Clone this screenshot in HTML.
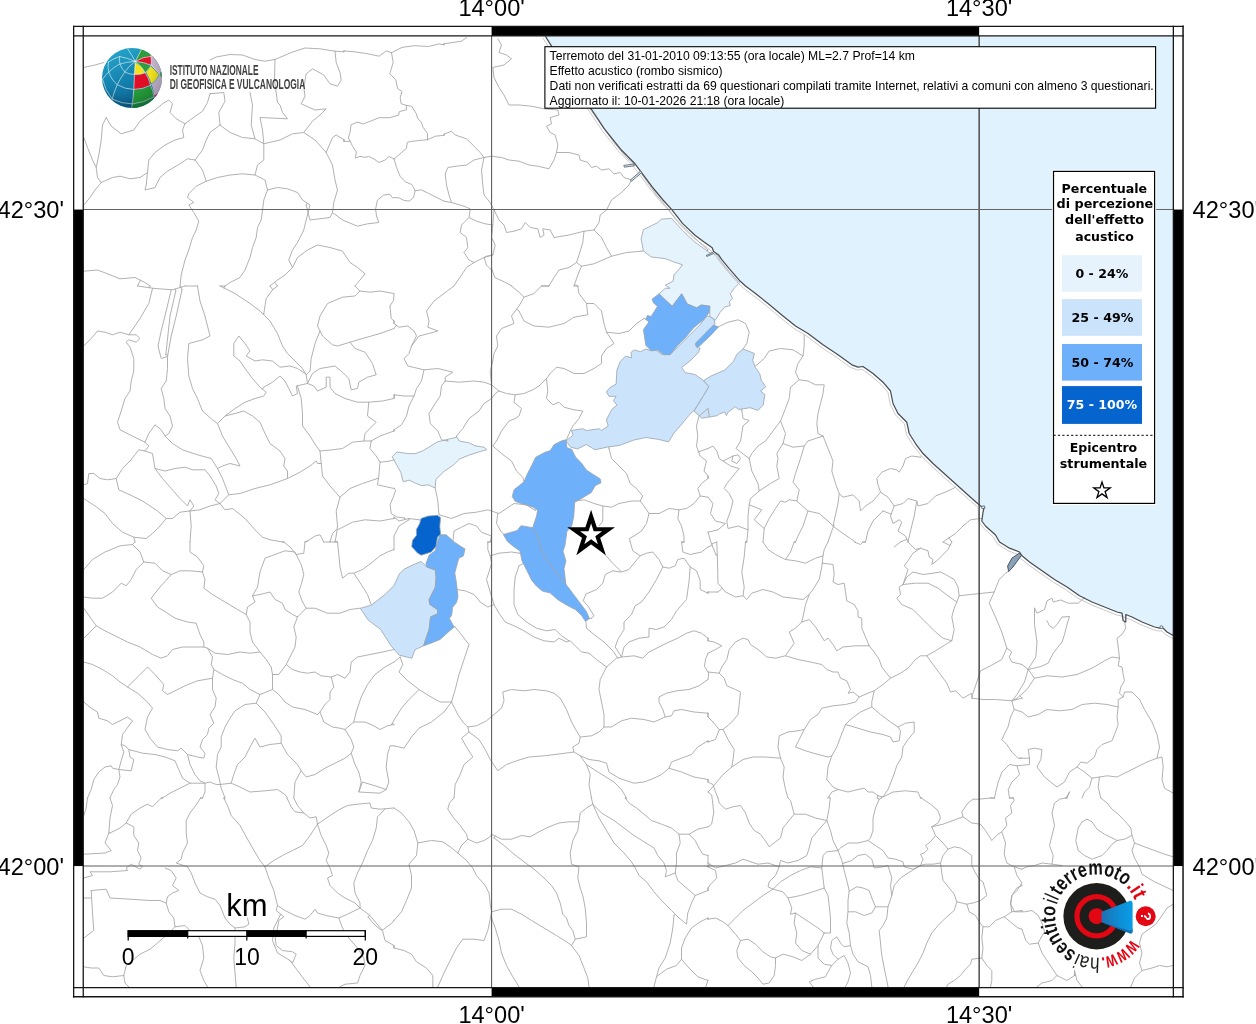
<!DOCTYPE html>
<html lang="it">
<head>
<meta charset="utf-8">
<title>Hai sentito il terremoto - Effetto acustico</title>
<style>
html,body{margin:0;padding:0;background:#fff;}
body{width:1256px;height:1024px;overflow:hidden;position:relative;}
svg{position:absolute;left:0;top:0;display:block;will-change:transform;}
.ax{font-family:"Liberation Sans",Arial,Helvetica,sans-serif;font-size:23.6px;fill:#000;}
.info{font-family:"Liberation Sans",Arial,Helvetica,sans-serif;font-size:12px;fill:#000;}
.lg{font-family:"DejaVu Sans",Verdana,sans-serif;font-weight:bold;font-size:11.45px;fill:#000;text-anchor:middle;}
.bd{fill:none;stroke:#a8a8a8;stroke-width:0.9;stroke-linejoin:round;stroke-linecap:round;}
</style>
</head>
<body>
<svg width="1256" height="1024" viewBox="0 0 1256 1024">
<defs>
<clipPath id="mapclip"><rect x="83.25" y="35.85" width="1090.1" height="951.7"/></clipPath>
</defs>
<rect x="0" y="0" width="1256" height="1024" fill="#fff"/>
<g clip-path="url(#mapclip)">
<!-- sea -->
<path id="sea" fill="#e0f2fe" stroke="none" d="M545.4,36.4 591.6,109.5 604.4,128.8 621.6,150.3 634.5,163.2 641.0,171.8 653.9,189.0 663.0,200.0 671.6,209.4 682.5,223.4 695.0,235.2 704.4,242.2 712.2,247.7 713.6,251.5 718.4,254.7 721.6,259.4 729.4,268.8 740.3,281.3 745.5,286.0 755.5,293.5 768.0,303.5 783.0,316.0 795.5,326.0 808.0,333.5 823.0,344.8 838.0,354.8 851.8,364.8 858.0,367.2 863.0,366.5 873.0,373.5 883.0,382.2 890.5,391.0 893.0,403.5 898.0,413.5 906.8,422.2 909.2,433.5 915.5,443.5 923.0,453.5 933.0,463.5 945.5,474.8 958.0,486.0 970.5,497.2 980.5,506.0 984.2,507.2 983.0,512.2 981.8,521.0 985.5,526.0 995.5,535.0 999.5,542.0 1009.5,548.2 1019.5,552.0 1022.0,555.8 1029.5,562.0 1042.0,570.8 1054.5,579.5 1067.0,587.0 1079.5,595.8 1092.0,602.0 1104.5,607.0 1117.0,612.0 1122.0,613.2 1123.2,620.8 1125.8,622.0 1125.8,614.5 1132.0,617.0 1142.0,622.0 1154.5,627.0 1159.5,628.2 1163.2,628.2 1167.0,632.0 1174.0,636.0 L1174,36 Z"/>
<!-- coloured municipalities -->
<g stroke="#98a2ad" stroke-width="0.8" stroke-linejoin="round">
<path fill="#e5f3fd" d="M661.4,219.1 671.6,218.4 682.5,230.5 695.0,242.2 709.1,252.3 716.9,254.7 720.0,260.2 729.4,271.9 739.5,282.8 734.8,287.5 730.2,293.8 732.5,298.4 729.4,301.6 730.2,305.5 724.7,307.0 720.0,312.5 715.3,320.3 709.8,316.4 709.8,306.2 701.2,305.0 696.6,307.8 687.2,303.9 681.7,293.8 672.3,306.2 665.3,300.0 659.1,293.8 665.3,288.3 670.0,288.3 665.3,285.2 673.1,281.2 673.9,275.0 679.4,268.8 682.5,264.8 673.1,261.7 665.3,258.6 651.2,257.0 643.4,250.8 641.1,239.1 643.4,229.7 651.2,225.8 657.5,222.7Z"/>
<path fill="#cbe4fb" d="M709.8,316.6 714.1,319.3 715.0,323.6 695.8,343.8 696.6,347.3 700.1,348.2 698.4,352.5 689.6,361.3 681.7,367.4 685.2,372.7 694.9,374.4 703.6,380.6 708.9,386.7 703.6,395.5 694.9,409.5 688.7,415.6 680.9,425.2 673.9,433.1 668.6,441.9 658.1,439.3 645.8,437.5 633.6,440.1 619.6,445.4 607.3,447.1 595.0,449.8 586.3,444.5 577.5,448.9 570.5,447.1 566.1,441.0 573.1,434.9 571.4,430.5 582.8,428.7 586.3,430.5 599.4,428.7 601.2,430.5 608.2,426.1 606.4,420.0 611.7,409.5 616.9,405.1 613.4,400.7 616.1,396.3 609.0,396.3 606.4,392.0 609.9,387.6 616.1,384.1 616.9,370.1 620.4,361.3 625.7,356.1 631.8,357.8 630.9,352.5 634.4,349.9 640.6,351.7 645.8,349.0 651.1,350.8 655.5,349.9 661.6,354.3 670.4,354.3 680.9,343.8 691.4,333.3 700.1,324.5 707.1,315.8Z"/>
<path fill="#cbe4fb" d="M743.0,349.0 754.4,353.4 752.7,360.4 755.3,367.4 759.7,373.6 761.4,380.6 765.8,386.7 760.6,391.1 764.9,394.6 763.2,405.1 757.9,410.4 750.1,407.7 738.7,409.5 735.2,406.8 728.2,412.1 726.4,415.6 724.7,412.1 719.4,413.9 717.6,415.6 701.9,418.2 694.0,411.2 703.6,395.5 708.9,386.7 703.6,380.6 710.6,376.2 724.7,370.1 733.4,361.3 736.9,354.3Z"/>
<path fill="#6fb0fa" d="M659.1,293.8 665.3,300.0 672.3,306.2 681.7,293.8 687.2,303.9 696.6,307.8 701.2,305.0 709.8,306.2 709.1,312.5 704.4,318.8 693.4,328.1 685.6,337.5 677.8,345.3 670.0,354.7 663.8,354.7 657.5,350.0 651.2,350.8 645.8,345.3 643.4,329.7 648.9,321.9 645.8,319.5 647.3,315.6 651.2,316.4 657.5,306.2 653.6,303.1 652.0,299.2Z"/>
<path fill="#6fb0fa" d="M713.8,325 718.4,327 711,335 698.5,347 695.8,346 695.8,343 705,333.5Z"/>
<path fill="#e5f3fd" d="M392.2,456.7 396.9,452.0 407.8,453.6 415.6,453.6 423.4,450.5 437.5,441.9 446.9,439.5 457.0,437.2 459.4,441.1 468.8,442.7 475.0,445.8 484.4,447.3 486.7,449.7 481.2,451.2 468.8,455.2 459.4,459.1 453.1,465.3 443.8,471.6 435.9,479.4 435.2,488.0 428.1,484.8 421.9,485.6 415.6,483.3 409.4,480.2 403.1,481.7 400.8,472.3 396.9,465.3Z"/>
<path fill="#cbe4fb" d="M421.2,561.4 426.7,566.9 435.3,570.0 436.1,577.8 435.3,587.2 432.2,593.4 429.1,599.7 429.8,604.4 437.7,609.8 437.7,613.8 430.6,616.9 429.1,629.4 425.9,638.8 423.6,645.8 415.0,649.7 411.9,658.3 399.4,655.2 391.6,646.6 380.6,629.4 368.1,620.0 360.3,608.3 371.2,605.2 385.3,594.2 393.9,585.6 399.4,573.9 404.1,569.2 410.3,566.1Z"/>
<path fill="#6fb0fa" d="M440.0,534.8 446.2,534.8 454.1,541.9 461.1,546.6 465.0,548.9 463.4,555.9 458.8,558.3 456.4,566.9 454.8,573.1 456.4,582.5 458.0,596.6 456.4,602.8 452.5,607.5 451.7,615.3 449.4,618.4 454.1,627.0 447.8,632.5 440.0,639.5 432.2,642.7 423.6,645.8 425.9,638.8 429.1,629.4 430.6,616.9 437.7,613.8 437.7,609.8 429.8,604.4 429.1,599.7 432.2,593.4 435.3,587.2 436.1,577.8 435.3,570.0 426.7,566.9 425.9,563.8 429.1,555.2 435.3,550.5 436.9,543.4Z"/>
<path fill="#0564cd" d="M421.1,518.4 428.1,516.1 437.5,515.3 440.6,517.7 439.8,526.2 440.6,534.1 437.5,537.2 435.9,546.6 431.2,552.0 426.6,553.6 421.1,555.2 417.2,552.8 411.7,546.6 412.5,540.3 416.4,535.6 416.4,529.4 419.5,523.9Z"/>
<path fill="#6fb0fa" d="M532.7,527.7 521.0,525.7 517.1,530.6 503.4,534.5 507.3,541.3 513.2,546.2 520.0,551.1 522.0,560.9 526.9,570.6 531.8,580.4 536.6,586.2 542.5,591.1 550.3,593.1 558.1,599.9 567.9,605.8 575.7,609.7 581.6,615.5 585.5,621.4 589.4,618.5 586.4,611.6 577.7,599.9 571.8,592.1 565.9,584.3 558.1,574.5 548.4,562.8 541.5,551.1 538.6,539.4 536.6,533.5Z"/>
<path fill="#6fb0fa" d="M565.9,439.8 566.9,447.6 571.8,449.5 575.7,457.3 581.6,463.2 586.4,470.0 592.3,473.9 600.1,478.8 601.1,482.7 595.2,485.7 591.3,492.5 581.6,498.4 574.7,502.3 573.8,515.9 571.8,525.7 566.9,531.6 565.0,545.2 563.0,551.1 565.9,560.9 564.0,568.7 565.9,584.3 558.1,574.5 548.4,562.8 541.5,551.1 538.6,539.4 536.6,533.5 532.7,527.7 536.6,515.9 537.6,510.1 532.7,507.1 523.0,504.2 515.2,501.3 512.2,496.4 514.2,489.6 519.1,485.7 523.9,481.8 526.9,474.9 531.8,465.2 535.7,457.3 544.5,452.5 550.3,450.5 554.2,444.6 562.0,440.7Z"/>
</g>
<!-- municipal boundaries -->
<g class="bd">
<path d="M83.8,67.5 95.0,65.0 103.8,62.5 M210.0,60.0 216.2,57.0 230.0,54.5 242.5,55.0 255.0,59.5 265.0,61.2 275.0,59.5 292.5,52.0 305.0,48.0 320.0,48.8 335.0,51.2 343.8,51.8 M335.0,51.2 336.2,62.5 340.0,72.5 341.2,80.0 337.5,86.2 330.0,83.8 323.8,75.0 312.5,68.8 306.2,73.8 303.8,87.5 305.0,96.2 301.2,103.8 315.0,110.0 326.2,108.8 320.0,115.0 312.5,121.2 303.8,132.5 M275.0,59.5 274.5,80.0 277.5,102.5 280.0,105.0 282.5,112.5 287.5,118.8 260.0,117.5 262.5,130.0 263.8,143.8 M250.0,92.5 252.5,105.0 251.2,125.0 255.0,138.8 M210.0,93.8 223.8,92.5 225.0,101.2 218.8,112.5 220.0,125.0 230.0,132.5 242.5,137.5 255.0,138.8 263.8,143.8 280.0,140.0 292.5,133.8 303.8,132.5 315.0,140.0 326.2,152.5 332.5,165.0 335.0,180.0 337.5,190.0 333.8,202.5 332.5,212.5 330.0,217.5 310.0,220.0 306.2,205.0 M106.2,117.5 111.2,126.2 121.2,133.8 133.8,130.0 140.0,121.2 147.5,115.0 155.0,110.0 162.5,103.8 168.8,100.0 172.5,103.8 170.0,112.5 176.2,118.8 185.0,123.8 190.0,120.0 202.5,111.2 207.5,102.5 210.0,93.8 M185.0,123.8 182.5,130.0 183.8,137.5 175.0,140.0 165.0,145.0 155.0,152.5 148.8,160.0 147.5,172.5 146.2,185.0 145.0,190.0 155.0,187.5 160.0,177.5 167.5,171.2 180.0,163.8 187.5,158.8 195.0,160.0 M106.2,117.5 102.5,125.0 101.2,140.0 98.8,155.0 96.2,167.5 97.5,177.5 101.2,182.5 112.5,177.5 120.0,176.2 130.0,178.8 140.0,177.5 147.5,172.5 M101.2,182.5 95.0,190.0 90.0,197.5 83.8,205.0 M83.8,137.5 87.5,147.5 92.5,160.0 96.2,167.5 M195.0,160.0 202.5,150.0 206.2,140.0 210.0,132.5 220.0,125.0 M195.0,160.0 202.5,170.0 206.2,181.2 217.5,177.5 230.0,175.0 242.5,173.8 255.0,175.0 257.5,165.0 263.8,160.0 263.8,143.8 M206.2,181.2 196.2,186.2 188.8,193.8 187.5,197.5 193.8,202.5 188.8,205.0 193.8,212.5 198.8,221.2 196.2,230.0 192.5,237.5 188.8,250.0 185.0,260.0 181.2,275.0 180.0,286.0 M255.0,175.0 265.0,180.0 267.5,190.0 263.8,200.0 262.5,210.0 261.2,220.0 257.5,227.5 256.2,237.5 252.5,247.5 250.0,257.5 245.0,270.0 240.0,277.5 230.0,282.5 225.0,286.0 M267.5,190.0 277.5,187.5 287.5,188.8 297.5,192.5 302.5,200.0 310.0,205.0 306.2,220.0 303.8,230.0 297.5,242.5 292.5,250.0 288.8,260.0 292.5,267.5 285.0,275.0 277.5,280.0 270.0,286.0 M292.5,267.5 297.5,257.5 307.5,250.0 317.5,245.0 330.0,247.5 342.5,251.2 350.0,262.5 357.5,267.5 365.0,273.8 360.0,280.0 355.0,286.0 M326.2,152.5 332.5,137.5 336.2,135.0 343.9,139.6 M332.5,212.5 342.5,220.0 357.5,226.2 367.5,223.8 378.8,222.5 376.6,216.2 M83.8,271.2 97.5,270.0 107.5,273.8 120.0,278.8 135.0,277.5 145.0,282.5 150.0,286.0"/>
<path d="M444.0,43.8 461.5,41.2 466.5,37.5 M444.3,134.1 451.5,131.2 455.2,135.0 466.5,138.8 474.0,146.2 480.2,152.5 484.0,157.5 491.5,156.2 M484.0,157.5 474.0,160.0 466.5,165.0 456.5,166.2 447.8,167.5 445.2,173.8 446.5,185.0 449.0,195.0 451.5,202.5 444.0,201.2 M484.0,157.5 481.5,170.0 482.8,185.0 484.0,195.0 490.2,202.5 494.0,210.0 499.0,220.0 504.0,225.0 506.5,232.5 514.0,231.2 521.5,228.8 525.2,222.5 530.2,227.5 537.8,228.8 540.2,237.5 544.0,235.0 542.8,228.8 550.2,230.0 554.0,237.5 569.0,235.0 579.0,232.5 584.0,231.2 594.0,230.0 599.0,222.5 600.2,215.0 606.5,210.0 611.5,200.0 621.5,192.5 629.0,185.0 631.5,180.0 M451.5,202.5 464.0,206.2 470.2,208.8 469.0,217.5 476.5,221.2 485.2,223.8 492.8,225.0 494.0,210.0 M469.0,217.5 461.5,225.0 460.2,232.5 466.5,237.5 467.8,247.5 464.0,252.5 469.0,260.0 474.0,262.5 486.5,256.2 492.8,255.0 M474.0,262.5 466.5,267.5 461.5,275.0 454.0,286.0 M492.8,225.0 491.5,237.5 495.2,245.0 492.8,255.0 484.0,257.5 486.5,265.0 491.5,270.0 M497.8,38.8 501.5,45.0 499.0,52.5 506.5,55.0 511.5,58.8 504.0,65.0 492.8,67.5 494.0,77.5 499.0,87.5 504.0,95.0 509.0,105.0 519.0,105.0 531.5,106.2 544.0,108.8 557.8,110.0 559.0,115.0 550.2,117.5 551.5,123.8 546.5,126.2 550.2,132.5 555.2,135.0 557.8,145.0 556.5,152.5 554.0,160.0 549.0,168.8 537.8,166.2 529.0,165.0 519.0,161.2 509.0,160.0 501.5,157.5 491.5,156.2 M556.5,152.5 569.0,152.5 579.0,155.0 580.2,160.0 587.8,162.5 591.5,167.5 596.5,166.2 601.5,170.0 609.0,168.8 614.0,173.8 620.2,172.5 624.0,177.5 631.5,180.0 M589.0,107.5 601.5,125.0 614.0,142.5 626.5,157.5 635.2,165.0 M641.5,173.8 656.5,195.0 669.0,210.0 676.5,220.0 694.0,237.5 708.0,250.0 M584.0,231.2 582.8,242.5 579.0,255.0 576.5,262.5 581.5,266.2 594.0,263.8 611.5,256.2 626.5,252.5 641.5,251.2 M594.0,230.0 601.5,237.5 606.5,247.5 611.5,256.2 M576.5,262.5 569.0,267.5 559.0,270.0 554.0,277.5 549.0,286.0 M581.5,266.2 577.8,275.0 574.0,286.0"/>
<path d="M137.5,286.0 155.0,288.5 172.5,289.8 185.0,286.0 M152.5,288.5 148.8,303.5 140.0,318.5 128.8,334.8 136.2,334.8 140.0,338.5 136.2,342.2 128.8,339.8 126.2,342.2 130.0,347.2 133.8,358.5 133.8,371.0 131.2,381.0 130.0,391.0 125.0,398.5 121.2,411.0 117.5,422.2 120.0,429.8 130.0,434.8 140.0,439.8 145.0,442.2 M128.8,334.8 120.0,332.2 112.5,334.8 105.0,332.2 97.5,331.0 91.2,338.5 83.8,346.0 M171.2,289.8 166.2,311.0 161.2,331.0 158.0,346.0 161.2,358.5 167.5,356.5 171.2,336.0 176.2,316.0 182.0,289.8 M175.8,291.0 170.0,316.0 165.8,354.8 M167.5,356.5 167.5,368.5 166.2,381.0 161.2,388.5 163.8,398.5 165.0,408.5 170.0,416.0 172.5,426.0 168.8,433.5 165.0,436.0 M145.0,442.2 148.8,433.5 155.0,424.8 161.2,429.8 165.0,436.0 172.5,443.5 182.5,449.8 197.5,454.8 211.2,458.5 217.5,468.5 M145.0,442.2 148.8,446.0 145.0,451.0 138.8,449.8 130.0,461.0 122.5,468.5 116.2,478.5 107.5,479.8 100.0,478.5 93.8,473.5 88.8,473.5 87.5,483.5 83.8,484.8 M145.0,451.0 152.5,453.5 155.0,468.5 165.0,471.0 175.0,468.5 185.0,467.2 192.5,469.8 205.0,469.8 210.0,476.0 216.2,486.0 218.8,493.5 215.0,499.8 220.0,503.5 228.8,494.8 222.5,478.5 217.5,468.5 M155.0,468.5 162.5,478.5 171.2,488.5 180.0,498.5 187.5,506.0 190.0,499.8 193.8,506.0 190.0,511.0 180.0,512.2 172.5,518.5 166.2,518.5 157.5,511.0 142.5,501.0 130.0,494.8 118.8,489.8 116.2,478.5 M190.0,511.0 200.0,509.8 210.0,506.0 220.0,503.5 M190.0,511.0 191.2,526.0 190.0,542.0 M166.2,518.5 160.0,526.0 152.5,533.5 146.2,538.5 133.8,537.2 122.5,532.2 112.5,523.5 105.0,513.5 95.0,506.0 83.8,498.5 M133.8,537.2 135.0,542.0 M197.5,286.0 200.0,301.0 205.0,316.0 210.0,336.0 202.5,339.8 188.8,343.5 187.5,358.5 188.8,376.0 192.5,388.5 197.5,398.5 202.5,411.0 212.5,419.8 217.5,423.5 M217.5,423.5 225.0,416.0 235.0,413.5 243.8,411.0 252.5,416.0 260.0,422.2 265.0,433.5 270.0,443.5 280.0,451.0 285.0,458.5 283.8,466.0 287.5,471.0 287.5,478.5 M217.5,423.5 222.5,436.0 230.0,448.5 236.2,458.5 240.0,466.0 230.0,463.5 222.5,466.0 217.5,468.5 M228.8,494.8 240.0,493.5 255.0,488.5 270.0,484.8 287.5,478.5 300.0,472.2 310.0,466.0 316.2,461.0 317.5,463.5 321.2,463.5 M225.0,416.0 235.0,408.5 245.0,402.2 255.0,398.5 263.8,396.0 266.2,392.2 260.0,387.2 252.5,378.5 245.0,368.5 240.0,361.0 233.8,356.0 233.8,343.5 238.8,336.0 245.0,343.5 250.0,351.0 246.2,356.0 255.0,361.0 262.5,359.8 272.5,361.0 280.0,367.2 290.0,366.0 297.5,368.5 305.0,373.5 M263.8,387.2 272.5,382.2 280.0,376.0 285.0,381.0 288.8,388.5 292.5,396.0 297.5,393.5 296.2,386.0 307.5,383.5 M220.0,286.0 235.0,293.5 250.0,303.5 260.0,311.0 270.0,321.0 277.5,333.5 282.5,346.0 287.5,353.5 295.0,361.0 302.5,368.5 306.2,374.8 307.5,383.5 M263.8,313.5 266.2,298.5 272.5,289.8 277.5,286.0 M307.5,383.5 312.5,373.5 320.0,368.5 335.0,366.0 342.5,372.2 348.8,378.5 351.2,389.8 357.5,388.5 358.8,382.2 367.5,377.2 376.2,374.8 372.5,363.5 365.0,352.2 355.0,348.5 350.0,342.2 337.5,346.0 332.5,344.8 322.5,336.0 317.5,326.0 320.0,316.0 327.5,303.5 342.5,297.2 355.0,296.0 360.0,291.0 370.0,292.2 380.0,291.0 394.0,293.5 M355.0,286.0 360.0,291.0 M350.0,342.2 362.5,338.5 380.0,333.5 394.0,328.5 M390.0,306.0 391.2,318.5 394.0,321.0 M320.0,331.0 315.0,343.5 311.2,358.5 310.0,371.0 306.2,374.8 M307.5,383.5 313.8,386.0 317.5,391.0 326.2,387.2 326.2,377.2 330.0,377.2 330.0,387.2 335.0,393.5 345.0,398.5 357.5,402.2 368.8,402.2 382.5,401.0 394.0,398.5 M297.5,386.0 301.2,398.5 302.5,413.5 302.5,426.0 310.0,436.0 316.2,446.0 320.0,451.0 321.2,463.5 M368.8,402.2 367.5,416.0 376.2,422.2 365.0,433.5 363.8,441.0 371.2,441.0 M320.0,451.0 332.5,449.8 342.5,448.5 352.5,442.2 363.8,441.0 M371.2,441.0 380.0,436.0 394.0,431.0 M371.2,441.0 370.0,448.5 376.2,456.0 380.0,462.2 390.0,461.0 394.0,459.8 M380.0,462.2 378.8,476.0 377.5,484.8 394.0,488.5 M321.2,463.5 322.5,476.0 330.0,486.0 340.0,497.2 350.0,488.5 362.5,483.5 377.5,478.5 M340.0,497.2 336.2,511.0 337.5,526.0 336.2,536.0 335.0,542.0 M337.5,529.8 352.5,522.2 365.0,519.8 380.0,521.0 394.0,518.5 M220.0,503.5 225.0,509.8 232.5,508.5 245.0,518.5 255.0,529.8 262.5,537.2 270.0,539.8 282.5,542.0 M307.5,541.0 315.0,536.0 320.0,534.8 323.8,542.0 M330.0,542.0 332.5,533.5 336.2,529.8"/>
<path d="M454.0,286.0 444.0,293.5 434.0,301.0 426.5,311.0 429.0,321.0 427.8,327.2 437.8,331.0 429.0,333.5 419.0,336.0 411.5,346.0 409.0,353.5 404.0,358.5 407.8,366.0 424.0,369.8 437.8,368.5 452.8,372.2 445.2,377.2 445.2,381.0 M394.0,323.5 399.0,327.2 407.8,326.0 414.0,331.0 416.5,336.0 411.5,346.0 M424.0,369.8 421.5,381.0 416.5,388.5 414.0,396.0 404.0,396.0 394.0,394.8 M414.0,396.0 409.0,406.0 406.5,416.0 401.5,424.8 394.0,429.8 M445.2,381.0 441.5,386.0 440.2,396.0 435.2,403.5 429.0,413.5 430.2,423.5 437.8,431.0 441.5,439.8 447.8,441.0 M445.2,381.0 459.0,382.2 474.0,381.0 484.0,382.2 491.5,384.8 499.0,391.0 506.5,393.5 515.2,394.8 524.0,393.5 532.8,389.8 539.0,386.0 546.5,378.5 M499.0,391.0 495.2,393.5 491.5,398.5 484.0,403.5 479.0,411.0 469.0,418.5 462.8,428.5 456.5,436.0 M515.2,394.8 514.0,402.2 521.5,408.5 519.0,416.0 515.2,418.5 509.0,421.0 501.5,431.0 496.5,441.0 492.8,446.0 501.5,453.5 511.5,461.0 516.5,471.0 522.8,477.2 524.0,481.8 M511.5,286.0 519.0,292.2 524.0,297.2 519.0,306.0 511.5,316.0 514.0,323.5 501.5,328.5 496.5,336.0 497.8,346.0 494.0,353.5 492.8,361.0 490.2,371.0 491.5,384.8 M524.0,297.2 534.0,293.5 541.5,286.0 M519.0,311.0 524.0,321.0 534.0,326.0 549.0,327.2 564.0,323.5 574.0,317.2 587.8,314.8 586.5,303.5 M577.8,286.0 579.0,293.5 586.5,303.5 594.0,303.5 601.5,311.0 604.0,323.5 606.5,332.2 614.0,343.5 606.5,348.5 601.5,356.0 601.5,363.5 594.0,368.5 584.0,373.5 574.0,373.5 564.0,368.5 556.5,367.2 550.2,373.5 546.5,378.5 M606.5,332.2 619.0,333.5 629.0,331.0 636.5,323.5 644.0,318.5 M546.5,378.5 547.8,391.0 546.5,398.5 552.8,404.8 559.0,402.2 564.0,407.2 574.0,409.8 582.8,411.0 579.0,418.5 572.8,426.0 570.2,431.0 566.5,439.8 M609.0,448.5 611.5,458.5 619.0,466.0 626.5,473.5 630.2,483.5 636.5,488.5 642.8,496.0 640.2,501.0 644.0,506.0 649.0,513.5 646.5,523.5 641.5,531.0 634.0,536.0 629.5,538.5 630.2,542.0 M649.0,513.5 659.0,513.5 669.0,508.5 679.0,509.8 677.8,518.5 681.5,526.0 684.0,536.0 684.0,542.0 M708.0,408.5 699.0,416.0 696.5,426.0 697.8,436.0 696.5,446.0 700.2,456.0 706.5,461.0 704.0,471.0 708.0,476.0 M708.0,478.5 701.5,483.5 697.8,488.5 700.2,496.0 694.0,503.5 686.5,508.5 679.0,509.8 M575.2,501.0 584.0,499.8 594.0,503.5 602.8,506.0 602.8,521.0 599.0,526.0 M602.8,506.0 611.5,507.2 619.0,503.5 631.5,501.0 640.2,501.0 M394.0,517.2 399.0,521.0 409.0,518.5 419.0,519.8 M435.2,488.0 437.8,501.0 439.0,514.8 451.5,518.5 464.0,513.5 476.5,512.2 487.8,509.8 491.5,511.0 499.0,513.5 506.5,508.5 514.0,503.5 526.5,504.8 535.2,510.5 M497.8,513.5 496.5,523.5 501.5,532.2 504.0,534.5 M394.0,536.0 399.0,526.0 409.0,519.8 M452.8,542.0 454.0,531.0 461.5,527.2 469.0,523.5 476.5,526.0 481.5,532.2 491.5,536.0 490.2,542.0"/>
<path d="M718.0,327.0 728.0,322.2 738.0,319.8 745.5,323.5 749.2,332.2 746.8,343.5 743.0,349.0 M755.5,366.0 764.2,358.5 769.2,351.0 780.5,348.5 793.0,349.8 803.0,356.0 804.2,346.0 804.2,334.8 M803.0,356.0 798.0,363.5 795.5,372.2 799.2,379.8 808.0,381.0 815.5,384.8 824.2,384.8 823.0,393.5 820.5,403.5 818.0,413.5 816.8,423.5 818.0,433.5 823.0,436.0 M799.2,379.8 790.5,387.2 789.2,398.5 785.5,408.5 780.5,421.0 785.5,433.5 783.0,443.5 793.0,447.2 804.2,446.0 808.0,441.0 823.0,436.0 M780.5,421.0 773.0,431.0 765.5,441.0 758.0,446.0 751.8,453.5 749.2,458.5 M741.8,410.5 743.0,418.5 749.2,420.5 743.0,426.0 740.5,441.0 736.0,448.5 749.2,458.5 M823.0,436.0 828.0,448.5 833.0,461.0 831.8,471.0 835.5,483.5 839.2,493.5 838.0,503.5 833.0,526.0 M804.2,446.0 800.5,458.5 795.5,473.5 793.0,482.2 799.2,489.8 796.8,501.0 808.0,511.0 819.2,513.5 828.0,521.0 833.0,526.0 843.0,533.5 850.5,538.5 855.5,542.0 M749.2,458.5 751.8,471.0 758.0,483.5 759.2,491.0 750.5,498.5 749.2,504.8 761.8,509.8 754.2,519.8 764.2,528.5 769.2,518.5 775.5,508.5 780.5,501.0 785.5,502.2 789.2,499.8 796.8,501.0 M759.2,491.0 770.5,483.5 779.2,478.5 776.8,466.0 778.0,458.5 776.8,453.5 783.0,443.5 M708.0,448.5 713.0,446.0 716.8,451.0 719.2,458.5 723.0,461.0 733.0,456.0 731.8,461.0 736.8,463.5 740.5,458.5 738.0,454.8 733.0,456.0 M723.0,461.0 730.5,466.0 739.2,468.5 733.0,476.0 726.8,483.5 724.2,488.5 729.2,493.5 733.0,501.0 730.5,511.0 726.8,521.0 728.0,528.5 738.0,526.0 748.0,529.8 746.8,542.0 M749.2,504.8 748.0,516.0 748.0,529.8 M708.0,497.2 713.0,503.5 710.5,513.5 715.5,521.0 725.5,523.5 718.0,529.8 708.0,532.2 M764.2,528.5 763.0,542.0 M808.0,511.0 803.0,526.0 798.0,536.0 795.5,542.0 M839.2,493.5 843.0,497.2 853.0,494.8 859.2,501.0 860.5,511.0 865.5,506.0 873.0,501.0 880.5,492.2 878.0,484.8 876.8,478.5 881.8,472.2 890.5,468.5 896.8,469.8 899.2,472.2 903.0,466.0 905.5,458.5 911.8,456.0 920.5,457.2 M880.5,492.2 888.0,497.2 894.2,506.0 903.0,503.5 908.0,498.5 916.8,501.0 918.0,506.0 928.0,503.5 935.5,496.0 948.0,491.0 955.5,487.2 M894.2,506.0 890.5,516.0 893.0,523.5 899.2,519.8 901.8,522.2 898.0,531.0 905.5,536.0 908.0,542.0 M916.8,501.0 914.2,516.0 910.5,531.0 908.0,542.0 M883.0,511.0 873.0,521.0 868.0,531.0 865.5,542.0 M980.5,518.5 970.5,519.8 963.0,526.0 955.5,533.5 948.0,538.5 943.0,542.0"/>
<path d="M83.8,569.5 92.5,559.5 105.0,552.0 120.0,545.8 132.5,544.5 140.0,552.0 143.8,562.0 M135.0,542.0 132.5,544.5 M143.8,562.0 136.2,569.5 131.2,579.5 126.2,585.8 121.2,583.2 112.5,592.0 102.5,598.2 92.5,598.2 83.8,597.0 M143.8,562.0 155.0,563.2 162.5,570.8 171.2,574.5 180.0,570.8 190.0,570.8 202.5,572.0 203.8,565.8 197.5,557.0 190.0,552.0 190.0,542.0 M171.2,574.5 160.0,587.0 151.2,598.2 157.5,607.0 167.5,613.2 175.0,618.2 187.5,622.0 196.2,623.2 200.0,634.5 203.8,642.0 203.8,647.0 M202.5,572.0 205.0,579.5 203.8,588.2 212.5,594.5 225.0,602.0 237.5,609.5 246.2,614.5 250.0,622.0 250.0,632.0 252.5,642.0 260.0,652.0 M246.2,614.5 247.5,607.0 255.0,602.0 252.5,595.8 260.0,594.5 270.0,592.0 275.0,599.5 282.5,603.2 285.0,609.5 292.5,614.5 297.5,617.0 M252.5,595.8 257.5,587.0 260.0,572.0 265.0,558.2 275.0,554.5 285.0,550.8 295.0,552.0 296.2,554.5 M283.8,542.0 290.0,547.0 296.2,554.5 303.8,553.2 305.0,542.0 M296.2,554.5 301.2,564.5 303.8,574.5 301.2,584.5 298.8,592.0 302.5,602.0 306.2,608.2 297.5,617.0 M306.2,608.2 315.0,608.2 327.5,613.2 340.0,613.2 350.0,609.5 360.0,608.2 M337.5,542.0 338.8,554.5 340.0,567.0 342.5,578.2 348.8,573.2 353.8,573.2 362.5,569.5 372.5,562.0 380.0,555.8 387.5,552.0 394.0,549.5 M353.8,573.2 361.2,584.5 367.5,594.5 371.2,604.5 M297.5,617.0 293.8,627.0 296.2,637.0 295.0,647.0 290.0,657.0 286.2,664.5 278.8,674.5 272.5,674.5 271.2,667.0 266.2,659.5 260.0,652.0 250.0,653.2 240.0,652.0 227.5,654.5 215.0,653.2 207.5,648.2 203.8,647.0 192.5,647.0 182.5,647.0 172.5,649.5 167.5,655.8 161.2,658.2 152.5,654.5 140.0,647.0 127.5,642.0 115.0,635.8 105.0,630.8 96.2,625.8 90.0,617.0 83.8,608.2 M96.2,625.8 90.0,632.0 83.8,638.2 M207.5,648.2 212.5,657.0 211.2,664.5 213.8,669.5 212.5,678.2 197.5,680.8 185.0,685.8 175.0,690.8 167.5,694.5 162.5,690.8 163.8,684.5 155.0,674.5 147.5,667.0 138.8,675.8 127.5,687.0 M83.8,662.0 92.5,664.5 102.5,669.5 112.5,675.8 120.0,682.0 127.5,687.0 137.5,693.2 147.5,702.0 152.5,708.2 147.5,717.0 145.0,729.5 150.0,738.2 157.5,747.0 167.5,749.5 177.5,750.8 181.2,748.2 187.5,754.5 197.5,757.0 203.8,758.2 205.0,753.2 200.0,747.0 202.5,739.5 207.5,734.5 208.8,728.2 213.8,723.2 210.0,714.5 215.0,707.0 216.2,698.2 212.5,689.5 212.5,678.2 M213.8,669.5 222.5,674.5 232.5,679.5 242.5,683.2 250.0,689.5 260.0,694.5 272.5,689.5 278.8,694.5 285.0,702.0 292.5,707.0 305.0,709.5 317.5,714.5 M272.5,689.5 272.5,674.5 M260.0,694.5 256.2,703.2 245.0,704.5 235.0,710.8 230.0,718.2 225.0,727.0 221.2,737.0 221.2,747.0 217.5,754.5 216.2,767.0 218.8,777.0 221.2,788.2 225.0,798.0 M256.2,703.2 265.0,712.0 273.8,724.5 281.2,735.8 281.2,743.2 270.0,744.5 260.0,747.0 255.0,738.2 250.0,747.0 245.0,757.0 237.5,764.5 233.8,774.5 231.2,783.2 M281.2,743.2 287.5,754.5 297.5,764.5 301.2,770.8 295.0,782.0 293.8,798.0 M301.2,770.8 306.2,777.0 315.0,774.5 325.0,768.2 335.0,763.2 345.0,758.2 351.2,753.2 M286.2,664.5 292.5,669.5 300.0,672.0 307.5,673.2 315.0,672.0 321.2,675.8 331.2,677.0 333.8,687.0 330.0,692.0 330.0,699.5 325.0,704.5 320.0,712.0 317.5,714.5 M331.2,677.0 337.5,674.5 345.0,678.2 350.0,672.0 351.2,662.0 357.5,657.0 370.0,654.5 382.5,652.0 394.0,649.5 M320.0,712.0 323.8,722.0 332.5,727.0 340.0,728.2 345.0,729.5 351.2,739.5 353.8,747.0 351.2,753.2 355.0,764.5 358.8,772.0 361.2,782.0 358.8,792.0 362.5,782.0 375.0,785.8 386.2,789.5 380.0,793.2 358.8,792.0 M386.2,789.5 388.8,782.0 386.2,767.0 387.5,754.5 390.0,745.8 394.0,745.8 M345.0,729.5 353.8,722.0 365.0,722.0 373.8,725.8 380.0,729.5 387.5,725.8 394.0,724.5 M353.8,722.0 356.2,712.0 361.2,697.0 367.5,684.5 375.0,674.5 385.0,667.0 394.0,662.0 M83.8,702.0 91.2,708.2 97.5,712.0 98.8,718.2 107.5,720.8 112.5,724.5 120.0,720.8 127.5,717.0 132.5,720.8 126.2,729.5 122.5,734.5 121.2,744.5 125.0,745.8 128.8,749.5 130.0,757.0 133.8,759.5 131.2,770.8 118.8,769.5 121.2,760.8 123.8,752.0 121.2,744.5 M128.8,749.5 142.5,753.2 155.0,754.5 165.0,757.0 175.0,760.8 178.8,769.5 182.5,778.2 190.0,783.2 205.0,783.2 210.0,782.0 216.2,784.5 220.0,784.5 231.2,783.2 240.0,787.0 250.0,792.0 265.0,790.8 277.5,789.5 285.0,794.5 287.5,798.0 M187.5,754.5 190.0,764.5 195.0,774.5 200.0,780.8 205.0,783.2 205.0,792.0 202.5,798.0 M190.0,783.2 180.0,788.2 170.0,793.2 162.5,798.0 M118.8,769.5 112.5,768.2 111.2,765.8 105.0,767.0 98.8,772.0 93.8,779.5 91.2,789.5 87.5,798.0 M118.8,769.5 120.0,777.0 117.5,784.5 113.8,789.5 110.0,798.0"/>
<path d="M400.2,657.0 402.8,664.5 399.0,672.0 407.8,680.8 419.0,689.5 429.0,695.8 440.2,702.0 451.5,702.0 M419.0,689.5 409.0,699.5 401.5,708.2 395.2,718.2 391.5,724.5 M394.0,662.0 400.2,657.0 M451.5,702.0 444.0,712.0 431.5,722.0 419.0,728.2 411.5,737.0 404.0,748.2 394.0,745.8 M451.5,702.0 455.2,689.5 459.0,674.5 464.0,659.5 469.0,644.5 460.2,633.2 455.2,627.0 M451.5,702.0 457.8,714.5 462.8,722.0 467.8,727.0 476.5,725.8 486.5,720.8 494.0,714.5 501.5,708.2 504.0,700.8 502.8,692.0 511.5,689.5 524.0,690.8 534.0,689.5 546.5,690.8 554.0,693.2 560.2,698.2 566.5,709.5 571.5,722.0 576.5,730.8 580.2,737.0 M467.8,727.0 469.0,732.0 461.5,738.2 466.5,747.0 472.8,757.0 464.0,764.5 460.2,774.5 455.2,784.5 454.0,798.0 M469.0,732.0 479.0,739.5 485.2,749.5 490.2,759.5 497.8,770.8 506.5,764.5 516.5,760.8 529.0,757.0 544.0,755.8 559.0,754.0 574.0,752.0 572.8,747.0 579.0,743.2 580.2,737.0 591.5,735.8 599.0,732.0 604.0,727.0 604.0,714.5 601.5,702.0 599.0,689.5 600.2,679.5 606.5,667.0 M606.5,667.0 596.5,659.5 589.0,653.2 581.5,652.0 574.0,644.5 570.2,640.8 566.5,642.0 559.0,638.2 554.0,642.0 544.0,640.8 534.0,637.0 524.0,630.8 514.0,625.8 505.2,622.0 499.0,613.2 494.0,604.5 490.2,592.0 486.5,579.5 489.0,572.0 491.5,563.2 490.2,555.8 487.8,549.5 487.8,542.0 M490.2,555.8 499.0,553.2 511.5,552.0 519.0,553.2 M519.0,565.8 515.2,577.0 514.0,589.5 514.0,604.5 517.8,614.5 526.5,622.0 536.5,628.2 546.5,630.8 555.2,629.5 561.5,635.8 569.0,640.8 M456.5,589.5 465.2,590.8 474.0,594.5 480.2,602.0 487.8,607.0 494.0,604.5 M606.5,667.0 616.5,658.2 621.5,657.0 M586.0,622.0 586.5,628.2 594.0,634.5 604.0,642.0 612.8,650.8 617.8,658.2 M591.5,618.2 594.0,615.8 587.8,605.8 583.2,600.8 586.0,594.0 596.5,589.5 602.8,583.2 605.2,574.5 612.8,570.8 620.2,572.0 M604.0,553.2 611.5,562.0 616.5,567.0 621.5,572.0 629.0,569.5 634.0,563.2 640.2,555.8 646.5,553.2 652.8,552.0 659.0,559.5 662.8,567.0 669.0,568.2 675.2,565.8 677.8,559.5 684.0,558.2 690.2,567.0 696.5,570.8 700.2,580.8 700.2,589.5 708.0,593.2 M630.2,542.0 632.8,550.8 640.2,555.8 M681.5,542.0 682.8,552.0 690.2,554.5 701.5,552.0 708.0,547.0 M662.8,567.0 656.5,579.5 649.0,592.0 641.5,602.0 635.2,605.8 631.5,614.5 624.0,622.0 624.0,629.5 617.8,639.5 615.2,647.0 621.5,657.0 M690.2,567.0 689.0,582.0 686.5,599.5 676.5,610.8 671.5,619.5 664.0,627.0 656.5,629.5 649.0,628.2 649.0,637.0 639.0,638.2 629.0,642.0 624.0,647.0 621.5,657.0 634.0,655.8 642.8,658.2 649.0,652.0 659.0,647.0 669.0,642.0 677.8,638.2 686.5,633.2 694.0,630.8 701.5,633.2 708.0,638.2 M604.0,727.0 611.5,727.0 621.5,720.8 631.5,718.2 644.0,719.5 654.0,722.0 665.2,717.0 662.8,709.5 659.0,702.0 659.0,697.0 666.5,693.2 676.5,690.8 689.0,689.5 699.0,685.8 708.0,679.5 M665.2,717.0 671.5,715.8 674.0,710.8 681.5,709.5 694.0,712.0 708.0,713.2 M574.0,752.0 580.2,755.8 589.0,759.5 599.0,760.8 606.5,763.2 609.0,772.0 619.0,778.2 634.0,783.2 644.0,782.0 654.0,778.2 661.5,774.5 669.0,768.2 671.5,762.0 681.5,758.2 691.5,754.5 697.8,747.0 708.0,740.8 M669.0,768.2 681.5,772.0 694.0,777.0 708.0,779.5 M580.2,755.8 586.5,764.5 594.0,769.5 604.0,775.8 614.0,782.0 621.5,789.5 626.5,798.0 M586.5,764.5 590.2,774.5 589.0,784.5 591.5,798.0"/>
<path d="M716.8,542.0 717.5,562.0 718.0,583.2 725.5,592.0 735.5,597.0 743.0,595.8 M718.0,592.0 708.0,592.0 M745.5,542.0 744.2,557.0 741.8,572.0 744.2,587.0 743.0,595.8 746.8,599.5 751.8,593.2 763.0,589.5 773.0,592.0 783.0,597.0 793.0,598.2 803.0,599.5 809.2,594.5 M763.0,542.0 768.0,549.5 775.5,554.5 785.5,559.5 795.5,560.8 805.5,563.2 815.5,558.2 823.0,555.8 M785.5,559.5 790.5,552.0 794.2,542.0 M828.0,542.0 824.2,549.5 823.0,555.8 821.8,567.0 819.2,579.5 813.0,589.5 809.2,594.5 805.5,604.5 803.0,617.0 801.8,622.0 M823.0,563.2 833.0,564.5 834.2,574.5 833.0,582.0 838.0,584.5 844.2,583.2 845.5,592.0 846.8,600.8 854.2,604.5 858.0,610.8 858.0,617.0 861.8,618.2 861.8,628.2 865.5,637.0 869.2,645.8 M801.8,622.0 809.2,619.5 815.5,627.0 820.5,634.5 824.2,640.8 828.0,638.2 833.0,644.5 836.8,650.8 843.0,647.0 855.5,645.8 869.2,645.8 M801.8,622.0 795.5,628.2 789.2,632.0 794.2,643.2 788.0,652.0 785.5,655.8 775.5,658.2 766.8,657.0 758.0,649.5 750.5,644.5 748.0,639.5 743.0,638.2 735.5,642.0 729.2,649.5 726.8,659.5 721.8,667.0 719.2,673.2 M708.0,640.8 714.2,642.0 721.8,645.8 715.5,649.5 708.0,653.2 M708.0,672.0 719.2,673.2 724.2,678.2 726.8,685.8 735.5,689.5 740.5,692.0 739.2,704.5 738.0,714.5 731.8,722.0 723.0,729.5 719.2,729.5 713.0,722.0 708.0,717.0 M719.2,729.5 715.5,739.5 708.0,742.0 M723.0,729.5 728.0,739.5 734.2,749.5 733.0,759.5 731.8,767.0 743.0,759.5 753.0,757.0 765.5,757.0 780.5,758.2 M731.8,767.0 723.0,774.5 716.8,782.0 710.5,789.5 708.0,792.0 M708.0,782.0 713.0,784.5 715.5,792.0 718.0,798.0 M780.5,758.2 778.0,747.0 779.2,735.8 788.0,732.0 798.0,730.8 804.2,729.5 810.5,719.5 818.0,714.5 821.8,708.2 833.0,705.8 845.5,704.5 855.5,702.0 859.2,697.0 M804.2,729.5 799.2,739.5 795.5,747.0 805.5,750.8 818.0,754.5 828.0,757.0 831.8,755.8 M780.5,758.2 784.2,767.0 783.0,777.0 785.5,789.5 788.0,798.0 M785.5,655.8 798.0,659.5 810.5,662.0 821.8,664.5 826.8,669.5 833.0,672.0 838.0,672.0 840.5,678.2 846.8,680.8 850.5,689.5 848.0,693.2 853.0,692.0 859.2,697.0 868.0,693.2 874.2,690.8 883.0,684.5 890.5,678.2 M869.2,645.8 874.2,652.0 879.2,659.5 881.8,667.0 890.5,678.2 900.5,673.2 908.0,668.2 915.5,659.5 920.5,655.8 926.8,655.8 935.5,650.8 945.5,644.5 951.8,640.8 954.2,629.5 951.8,617.0 954.2,608.2 956.8,602.0 959.2,595.8 958.0,587.0 954.2,579.5 945.5,574.5 940.5,572.0 933.0,573.2 923.0,574.5 913.0,572.0 906.8,577.0 903.0,584.5 M903.0,584.5 899.2,587.0 900.5,594.5 896.8,598.2 901.8,604.5 913.0,609.5 920.5,617.0 928.0,624.5 935.5,632.0 943.0,638.2 951.8,640.8 M903.0,584.5 915.5,583.2 928.0,583.2 938.0,588.2 948.0,595.8 956.8,602.0 M903.0,584.5 905.5,577.0 908.0,569.5 904.2,565.8 908.0,560.8 913.0,553.2 920.5,548.2 928.0,550.8 929.2,557.0 933.0,559.5 931.8,564.5 936.8,560.8 941.8,555.8 948.0,549.5 951.8,542.0 M894.2,547.0 900.5,542.0 M908.0,542.0 915.5,549.5 920.5,548.2 M854.2,542.0 860.5,544.5 863.0,542.0 M959.2,595.8 970.5,594.5 983.0,593.2 994.2,592.0 999.2,579.5 1005.5,573.2 1009.2,570.8 M994.2,592.0 989.2,603.2 995.5,617.0 1001.8,632.0 1006.8,648.2 1011.8,652.0 1009.2,657.0 1011.8,662.0 1022.0,664.5 M1006.8,648.2 1001.8,659.5 990.5,665.8 980.5,670.8 976.8,682.0 973.0,693.2 971.8,698.2 M926.8,655.8 933.0,664.5 940.5,674.5 946.8,683.2 950.5,692.0 955.5,690.8 963.0,698.2 971.8,693.2 971.8,698.2 983.0,699.5 995.5,699.5 1011.8,700.8 1022.0,698.2 M1011.8,700.8 1014.2,709.5 1010.5,717.0 1008.0,727.0 1004.2,734.5 1001.8,739.5 1006.8,744.5 1011.8,752.0 1018.0,758.2 1022.0,758.2 M874.2,690.8 871.8,702.0 871.8,707.0 860.5,712.0 850.5,719.5 845.5,724.5 840.5,737.0 836.8,747.0 831.8,755.8 828.0,767.0 826.8,779.5 833.0,787.0 838.0,789.5 M845.5,724.5 858.0,728.2 870.5,732.0 883.0,734.5 890.5,737.0 893.0,742.0 899.2,740.8 900.5,730.8 898.0,727.0 905.5,723.2 914.2,722.0 914.2,732.0 908.0,739.5 903.0,747.0 901.8,757.0 896.8,765.8 893.0,777.0 888.0,789.5 883.0,797.0 M871.8,707.0 880.5,714.5 890.5,722.0 898.0,727.0 M838.0,789.5 848.0,792.0 858.0,789.5 864.2,788.2 868.0,792.0 873.0,792.0 878.0,795.8 883.0,797.0 893.0,792.0 905.5,790.8 918.0,792.0 920.5,798.0 M838.0,789.5 831.8,792.0 828.0,798.0"/>
<path d="M1034.5,608.2 1037.0,613.2 1044.5,609.5 1047.0,600.8 1052.0,598.2 1053.2,602.0 1060.8,600.0 1068.2,603.2 1078.2,603.2 1084.5,597.5 M1034.5,608.2 1034.5,624.5 1037.0,642.0 1035.8,657.0 1029.5,667.0 1028.2,669.5 M1047.0,620.8 1049.5,625.8 1053.2,628.2 1057.0,624.5 1062.0,617.0 1069.5,616.5 1067.0,624.5 1064.5,634.5 1062.0,642.0 1053.2,653.2 1048.2,663.2 1040.8,666.5 1028.2,669.5 M1022.0,664.5 1028.2,669.5 1024.5,682.0 1017.0,694.5 1012.0,700.8 M1019.5,758.2 1029.5,758.2 1028.2,749.5 1034.5,748.2 1042.0,749.5 1040.8,759.5 1037.0,767.0 1044.5,777.0 1052.0,783.2 1057.0,787.0 1064.5,782.0 1069.5,772.0 1077.0,767.0 M1029.5,758.2 1029.5,764.5 1017.0,765.8 1009.5,764.5 1002.0,772.0 998.2,782.0 995.8,792.0 994.5,798.0 M1017.0,765.8 1019.5,774.5 1012.0,782.0 1008.2,789.5 1009.5,798.0 M1028.2,669.5 1034.5,678.2 1047.0,675.8 1062.0,677.0 1077.0,674.5 1092.0,668.2 1104.5,660.8 1112.0,657.0 1119.5,658.2 M1034.5,678.2 1027.0,689.5 1017.0,698.2 1012.0,700.8 M1014.5,709.5 1022.0,712.0 1028.2,717.0 1038.2,714.5 1047.0,709.5 1059.5,710.8 1072.0,709.5 1082.0,704.5 1094.5,703.2 1107.0,704.5 1118.2,707.0 M1124.5,622.0 1125.8,628.2 1122.0,634.5 1117.0,638.2 1118.2,647.0 1119.5,658.2 1118.2,665.8 1122.0,667.0 1123.2,674.5 1124.5,680.8 1120.8,687.0 1119.5,693.2 1123.2,697.0 1118.2,699.5 1118.2,707.0 1117.0,717.0 1118.2,724.5 1114.5,734.5 1112.0,740.8 1102.0,744.5 1097.0,749.5 1094.5,757.0 1087.0,763.2 1080.8,762.0 1077.0,767.0 1084.5,772.0 1092.0,778.2 1099.5,777.0 1107.0,775.8 1117.0,777.0 1127.0,772.0 1137.0,767.0 1147.0,762.0 1157.0,758.2 M1123.2,697.0 1124.5,692.0 1132.0,692.0 1139.5,699.5 1144.5,709.5 1152.0,722.0 1157.0,734.5 1159.5,747.0 1157.0,758.2 1162.0,757.0 1163.2,767.0 1162.0,779.5 1164.5,788.2 1173.2,793.2 M1092.0,778.2 1089.5,787.0 1084.5,792.0 1082.0,798.0 M1099.5,777.0 1098.2,787.0 1100.8,798.0 M1069.5,792.0 1067.0,798.0"/>
<path d="M87.5,798.0 86.2,808.0 83.8,815.5 M110.0,798.0 112.5,805.5 110.0,818.0 108.8,833.0 105.0,843.0 111.2,850.5 105.0,853.0 83.8,854.2 M110.0,833.0 120.0,828.0 126.2,823.0 133.8,826.8 133.8,835.5 138.8,843.0 137.5,850.5 141.2,858.0 138.8,864.2 142.5,866.8 140.0,869.2 131.2,864.2 126.2,868.0 127.5,870.5 110.0,871.8 90.0,871.8 92.5,875.5 83.8,878.0 M126.2,823.0 131.2,814.2 140.0,808.0 147.5,804.2 152.5,806.8 160.0,799.2 161.6,798.0 M200.5,798.0 197.5,803.0 190.0,813.0 186.2,820.5 186.2,833.0 187.5,843.0 182.5,853.0 181.2,859.2 176.2,863.0 187.5,866.8 M223.8,798.0 227.5,805.5 231.2,815.5 240.0,825.5 246.2,836.8 252.5,848.0 260.0,860.5 265.0,866.8 M286.9,798.0 291.2,806.8 295.0,811.8 303.8,813.0 310.0,818.0 316.2,816.8 317.5,824.2 M317.5,824.2 310.0,835.5 302.5,845.5 292.5,850.5 282.5,855.5 273.8,860.5 265.0,866.8 M317.5,824.2 330.0,815.5 340.0,809.2 347.5,805.5 357.5,804.2 370.0,803.0 371.2,808.0 380.0,809.2 394.0,808.0 M293.8,798.0 297.5,805.5 303.8,813.0 M317.5,824.2 321.2,835.5 326.2,845.5 328.8,853.0 326.2,860.5 330.0,868.0 332.5,875.5 327.5,878.0 330.0,885.5 337.5,893.0 345.0,898.0 355.0,903.0 360.0,908.0 M385.0,809.2 377.5,816.8 376.2,828.0 372.5,840.5 367.5,850.5 362.5,863.0 357.5,873.0 353.8,883.0 355.0,893.0 360.0,903.0 360.0,908.0 370.0,915.5 376.2,923.0 382.5,930.5 385.0,940.5 394.0,945.5 M360.0,908.0 347.5,914.2 338.8,918.0 326.2,915.5 317.5,913.0 315.0,909.2 310.0,915.5 305.0,919.2 295.0,915.5 285.0,910.5 277.5,905.5 M265.0,866.8 268.8,878.0 273.8,890.5 277.5,905.5 276.2,910.5 283.8,916.8 278.8,920.5 277.5,928.0 275.0,935.5 276.2,945.5 282.5,950.5 292.5,951.8 296.2,954.2 292.5,963.0 290.0,960.5 M280.0,915.5 273.8,928.0 272.5,940.5 277.5,953.0 290.0,960.5 297.5,970.5 305.0,980.5 310.0,986.8 M338.8,918.0 342.5,928.0 348.8,938.0 357.5,948.0 363.8,958.0 365.0,965.5 360.0,975.5 357.5,983.0 345.0,984.2 340.0,986.8 M187.5,866.8 191.2,873.0 195.0,883.0 200.0,893.0 207.5,896.8 215.0,899.2 220.0,905.5 225.0,918.0 230.0,924.2 235.0,928.0 245.0,926.8 248.8,924.2 247.5,918.0 M235.0,928.0 235.0,943.0 233.8,958.0 235.0,973.0 236.2,986.8 M165.0,868.0 171.2,870.5 176.2,878.0 172.5,885.5 178.8,890.5 172.5,893.0 167.5,896.8 166.2,903.0 168.8,911.8 173.8,918.0 175.0,926.8 185.0,925.5 190.0,930.5 198.8,936.8 202.5,945.5 203.8,958.0 200.0,970.5 203.8,980.5 207.5,986.8 M175.0,926.8 167.5,934.2 157.5,943.0 150.0,949.2 140.0,954.2 132.5,960.5 126.2,965.5 123.8,975.5 125.0,983.0 128.8,986.8 M91.2,890.5 106.2,889.2 110.0,898.0 130.0,899.2 150.0,900.5 160.0,900.5 166.2,903.0 M91.2,890.5 92.5,913.0 93.8,930.5 83.8,938.0 M83.8,898.0 91.2,898.0 M83.8,966.8 91.2,968.0 98.8,968.0 103.8,975.5 112.5,976.8 123.8,975.5"/>
<path d="M454.0,798.0 449.5,803.0 447.8,809.2 452.8,816.8 460.2,825.5 466.5,834.2 467.8,839.2 476.5,843.0 484.0,840.5 490.2,836.8 491.5,834.2 501.5,839.2 511.5,839.2 521.5,835.5 530.2,836.8 539.0,831.8 549.0,826.8 559.0,823.0 569.0,821.8 579.0,821.8 M467.8,839.2 461.5,845.5 457.8,853.0 M394.0,808.0 401.5,813.0 409.0,821.8 414.0,830.5 417.8,843.0 424.0,841.8 431.5,840.5 442.8,841.8 450.2,846.8 457.8,853.0 466.5,860.5 472.8,868.0 476.5,875.5 485.2,885.5 489.0,893.0 490.2,904.2 491.5,911.8 M417.8,843.0 416.5,855.5 409.0,864.2 411.5,875.5 411.5,888.0 406.5,900.5 401.5,911.8 394.0,920.5 M491.5,911.8 490.2,919.2 487.8,930.5 484.0,940.5 474.0,939.2 462.8,939.2 456.5,948.0 450.2,960.5 444.0,973.0 437.8,986.8 M394.0,948.0 404.0,950.5 411.5,954.2 416.5,961.8 426.5,968.0 432.8,975.5 432.8,986.8 M491.5,911.8 501.5,909.2 511.5,909.2 521.5,914.2 531.5,920.5 544.0,928.0 556.5,935.5 566.5,941.8 571.5,945.5 M491.5,918.0 495.2,928.0 499.0,940.5 501.5,953.0 506.5,965.5 512.8,976.8 519.0,986.8 M494.0,838.0 504.0,845.5 514.0,854.2 524.0,861.8 534.0,869.2 544.0,878.0 551.5,885.5 556.5,893.0 560.2,903.0 562.8,914.2 566.5,918.0 569.0,925.5 572.8,930.5 575.2,939.2 571.5,945.5 M575.2,939.2 586.5,936.8 586.5,923.0 585.2,908.0 582.8,895.5 580.2,888.0 577.8,878.0 579.0,866.8 571.5,864.2 570.2,853.0 572.8,840.5 577.8,830.5 579.0,821.8 580.2,813.0 586.5,808.0 592.8,804.2 591.4,798.0 M571.5,945.5 579.0,955.5 584.0,968.0 587.8,978.0 589.0,986.8 M592.8,804.2 599.0,818.0 606.5,830.5 614.0,843.0 624.0,853.0 631.5,861.8 635.2,868.0 639.0,875.5 646.5,881.8 654.0,891.8 662.8,901.8 671.5,910.5 679.0,918.0 686.5,924.2 687.8,913.0 691.5,903.0 695.2,895.5 M592.8,804.2 601.5,813.0 614.0,820.5 624.0,828.0 634.0,835.5 644.0,841.8 654.0,848.0 657.8,855.5 664.0,863.0 666.5,870.5 665.2,876.8 675.2,873.0 M625.2,798.0 629.0,803.0 636.5,808.0 644.0,814.2 651.5,820.5 661.5,824.2 671.5,828.0 679.0,834.2 680.2,843.0 676.5,853.0 676.5,863.0 675.2,873.0 677.8,880.5 686.5,888.0 695.2,895.5 708.0,890.5 M679.0,834.2 689.0,834.2 697.8,829.2 708.0,826.8 M689.0,834.2 695.2,840.5 699.0,848.0 702.8,854.2 708.0,855.5 M674.0,915.5 672.8,928.0 670.2,943.0 665.2,958.0 659.0,968.0 656.5,976.8 654.0,986.8 M656.5,976.8 666.5,969.2 676.5,965.5 681.5,959.2 681.5,948.0 685.2,938.0 691.5,928.0 700.2,921.8 708.0,918.0 M681.5,959.2 689.0,968.0 697.8,976.8 708.0,980.5"/>
<path d="M718.0,798.0 719.2,803.0 725.5,809.2 733.0,806.8 740.5,805.5 745.5,813.0 749.2,823.0 754.2,830.5 760.5,834.2 766.8,843.0 769.2,846.8 775.5,841.8 780.5,838.0 783.0,828.0 788.0,821.8 794.2,814.2 790.5,800.5 788.0,798.0 M794.2,814.2 805.5,814.2 815.5,818.0 826.8,820.5 829.2,808.0 830.2,798.0 M877.2,798.0 879.2,799.2 881.3,798.0 M921.5,798.0 923.0,799.2 930.5,804.2 938.0,810.5 940.5,818.0 938.0,823.0 931.8,826.8 M828.0,798.0 828.0,798.0 M879.2,799.2 875.5,808.0 873.0,818.0 873.0,830.5 870.5,838.0 868.0,840.5 858.0,843.0 848.0,843.0 840.5,848.0 838.0,850.5 M826.8,820.5 830.5,830.5 833.0,840.5 838.0,850.5 M826.8,820.5 818.0,830.5 811.8,838.0 809.2,848.0 806.8,855.5 798.0,860.5 788.0,863.0 780.5,860.5 779.2,866.8 768.0,863.0 758.0,864.2 743.0,859.2 735.5,863.0 725.5,865.5 715.5,868.0 708.0,863.0 M708.0,866.8 715.5,870.5 716.8,878.0 710.5,884.2 708.0,888.0 M779.2,866.8 775.5,875.5 769.2,881.8 768.0,886.8 773.0,889.2 780.5,881.8 790.5,875.5 800.5,870.5 810.5,866.8 821.8,868.0 M773.0,889.2 763.0,895.5 753.0,903.0 743.0,910.5 735.5,918.0 728.0,925.5 M708.0,919.2 715.5,918.0 723.0,921.8 728.0,925.5 735.5,934.2 740.5,940.5 736.8,950.5 738.0,958.0 744.2,965.5 751.8,971.8 758.0,978.0 763.0,984.2 769.2,983.0 774.2,975.5 775.5,965.5 775.5,958.0 783.0,954.2 793.0,956.8 801.8,960.5 810.5,954.2 818.0,945.5 821.8,938.0 824.2,933.0 M740.5,940.5 748.0,939.2 755.5,944.2 763.0,951.8 770.5,956.8 775.5,958.0 M773.0,889.2 783.0,891.8 788.0,898.0 800.5,895.5 813.0,891.8 824.2,888.0 M788.0,898.0 791.8,908.0 790.5,914.2 795.5,913.0 803.0,918.0 810.5,923.0 818.0,928.0 824.2,933.0 M795.5,913.0 794.2,923.0 796.8,933.0 795.5,943.0 801.8,950.5 810.5,954.2 M824.2,933.0 830.5,933.0 830.5,918.0 829.2,905.5 828.0,895.5 824.2,888.0 823.0,878.0 821.8,868.0 823.0,855.5 826.8,851.8 838.0,850.5 841.8,860.5 844.2,870.5 846.8,880.5 849.2,890.5 848.0,900.5 848.0,911.8 846.8,923.0 849.2,933.0 850.5,945.5 844.2,946.8 840.5,943.0 836.8,936.8 831.8,940.5 830.5,948.0 833.0,954.2 838.0,959.2 831.8,965.5 824.2,964.2 818.0,958.0 818.0,945.5 M850.5,945.5 853.0,954.2 858.0,961.8 868.0,966.8 870.5,975.5 871.8,986.8 M838.0,959.2 844.2,955.5 848.0,963.0 850.5,973.0 848.0,981.8 845.5,986.8 M831.8,965.5 828.0,971.8 825.5,976.8 815.5,979.2 809.2,981.8 813.0,986.8 M844.2,863.0 851.8,860.5 858.0,855.5 865.5,854.2 871.8,859.2 874.2,868.0 883.0,866.8 888.0,865.5 891.8,878.0 890.5,885.5 891.8,895.5 888.0,906.8 875.5,906.8 M848.0,911.8 855.5,911.8 864.2,915.5 871.8,913.0 875.5,906.8 871.8,898.0 869.2,890.5 863.0,888.0 856.8,886.8 850.5,890.5 849.2,890.5 M868.0,840.5 875.5,845.5 883.0,850.5 888.0,858.0 895.5,859.2 903.0,861.8 904.2,866.8 913.0,869.2 920.5,865.5 925.5,864.2 933.0,864.2 940.5,863.0 M931.8,826.8 935.5,835.5 930.5,841.8 925.5,845.5 928.0,849.2 924.2,853.0 920.5,854.2 923.0,859.2 920.5,865.5 908.0,873.0 900.5,878.0 894.2,885.5 891.8,895.5 M931.8,826.8 943.0,824.2 953.0,820.5 963.0,816.8 961.8,811.8 968.0,803.0 973.0,799.2 979.2,799.2 990.5,798.0 990.5,798.0 M963.0,816.8 971.8,823.0 980.5,824.2 985.5,830.5 991.8,840.5 998.0,834.2 1001.8,831.8 1006.8,825.5 1005.5,818.0 1011.8,813.0 1010.5,805.5 1014.2,800.5 1013.5,798.0 M1001.8,831.8 1005.5,843.0 1004.2,854.2 1006.8,863.0 1014.2,866.8 1022.0,869.2 M935.5,835.5 943.0,843.0 948.0,849.2 954.2,846.8 960.5,848.0 966.8,851.8 971.8,855.5 971.8,865.5 975.5,873.0 979.2,879.2 983.0,881.8 985.5,890.5 986.8,895.5 980.5,900.5 973.0,903.0 966.8,904.2 M948.0,849.2 943.0,855.5 940.5,863.0 941.8,873.0 943.0,880.5 949.2,888.0 954.2,894.2 956.8,901.8 966.8,904.2 M956.8,901.8 954.2,910.5 945.5,918.0 938.0,925.5 931.8,933.0 926.8,943.0 923.0,953.0 918.0,963.0 911.8,973.0 906.8,981.8 904.2,986.8 M888.0,906.8 886.8,918.0 883.0,925.5 879.2,930.5 880.5,943.0 881.8,955.5 884.2,968.0 886.8,980.5 888.0,986.8 M966.8,904.2 969.2,911.8 975.5,915.5 979.2,921.8 983.0,926.8 989.2,926.8 995.5,920.5 1004.2,916.8 1011.8,911.8 1022.0,910.5 M1004.2,916.8 1011.8,923.0 1018.0,928.0 1022.0,929.2 M1011.8,911.8 1010.5,903.0 1011.8,895.5 1016.8,888.0 1022.0,885.5 M983.0,926.8 981.8,938.0 983.0,948.0 981.8,958.0 986.8,965.5 991.8,970.5 991.8,980.5 990.5,986.8 M981.8,958.0 971.8,959.2 970.5,964.2 965.5,969.2 960.5,975.5 954.2,980.5 948.0,984.2 946.8,986.8"/>
<path d="M1065.8,798.0 1065.8,798.0 1059.5,799.2 1054.5,803.0 1052.0,813.0 1054.5,825.5 1052.0,835.5 1049.5,845.5 1053.2,855.5 1052.0,864.2 1042.0,863.0 1034.5,865.5 1027.0,866.8 1022.0,869.2 M1052.0,864.2 1062.0,865.5 M1014.5,868.0 1017.0,875.5 1022.0,883.0 1017.0,890.5 1012.0,895.5 1010.8,904.2 1014.5,911.8 1024.5,911.8 1032.0,910.5 1038.2,915.5 1042.0,923.0 1044.5,931.8 1040.8,938.0 1038.2,943.0 M1022.0,929.2 1025.8,940.5 1029.5,944.2 1038.2,943.0 1042.0,953.0 1047.0,960.5 1052.0,968.0 1057.0,975.5 1052.0,980.5 1042.0,983.0 1037.0,986.8 M1057.0,975.5 1067.0,980.5 1074.5,975.5 M1074.5,970.5 1077.0,980.5 1082.0,986.8 M1100.8,798.0 1100.8,798.0 1107.0,803.0 1112.0,809.2 1118.2,814.2 1124.5,820.5 1130.8,828.0 1132.0,835.5 1124.5,839.2 1117.0,840.5 1112.0,844.2 1107.0,850.5 1102.0,855.5 1092.0,859.2 1084.5,855.5 1078.2,850.5 1075.8,840.5 1078.2,828.0 1082.0,821.8 1087.0,819.2 1092.0,821.8 1097.0,829.2 1104.5,834.2 1114.5,839.2 1117.0,840.5 M1132.0,835.5 1134.5,843.0 1132.0,850.5 1134.5,858.0 1139.5,866.8 1142.0,874.2 1154.5,881.8 1173.2,890.5 M1134.5,843.0 1144.5,846.8 1154.5,850.5 1164.5,854.2 1173.2,856.8 M1173.2,904.2 1167.0,908.0 1162.0,915.5 1155.8,924.2 1142.0,934.2 1139.5,943.0 1142.0,953.0 1139.5,963.0 1142.0,970.5 1134.5,978.0 1130.8,986.8 M1142.0,970.5 1152.0,968.0 1159.5,965.5 1167.0,966.8 1173.2,965.5"/>
<path d="M491.8,269.3 494.9,277.6 504.2,281.8 512.0,286.0 M394.0,294.0 393.5,300.4 390.0,306.0 M394.0,488.0 395.7,490.2 393.4,496.8 390.1,504.6 391.2,513.6 396.8,517.0 404.6,518.0 M394.0,536.0 394.0,550.0"/>
<path d="M708.0,448.5 698.0,452.0 M708.0,532.0 710.8,541.9 716.0,555.0 M828.0,542.0 831.0,533.0 834.0,525.0 M708.0,653.2 705.7,658.7 704.4,666.3 708.0,672.0 M708.0,792.0 711.7,795.0 713.8,812.2 711.7,824.0 708.0,827.0 M708.0,980.0 705.5,987.5 M394.0,920.0 392.6,922.5 381.8,930.6 375.0,925.2 368.2,917.1 M185.0,286.0 197.5,286.0"/>
<path d="M344.0,50.9 354.5,51.8 366.8,53.6 379.1,56.2 386.2,50.9 391.5,52.7 M391.5,52.7 402.0,47.4 414.3,45.7 428.4,46.5 438.9,43.9 444.0,44.8 M391.5,52.7 393.2,62.4 389.7,73.8 395.8,79.9 397.6,88.7 402.0,91.4 400.2,97.5 401.1,103.7 406.4,105.4 M406.4,105.4 406.4,109.8 399.4,111.6 398.5,115.1 389.7,117.7 379.1,117.7 370.4,121.2 363.3,123.9 357.2,122.1 351.0,124.8 350.2,131.8 348.4,137.9 350.2,141.4 344.0,141.4 M350.2,141.4 352.8,146.7 356.3,152.0 355.4,158.1 359.8,156.4 365.1,157.3 368.6,156.4 373.9,159.0 379.1,162.5 385.3,159.9 388.8,156.4 394.1,159.0 M406.4,105.4 411.7,106.3 416.1,113.3 417.8,118.6 421.3,122.1 423.1,127.4 427.5,133.5 427.5,139.7 M427.5,139.7 435.4,136.2 444.0,135.3 M427.5,139.7 417.8,140.6 411.7,141.4 407.3,142.3 406.4,148.5 401.1,152.9 394.1,159.0 M394.1,159.0 396.7,167.8 400.2,176.6 405.5,181.9 411.7,184.5 415.2,190.7 M415.2,190.7 421.3,189.8 428.4,193.3 437.1,197.7 444.0,201.2 M415.2,190.7 413.4,197.7 409.0,201.2 403.8,200.3 398.5,197.7 392.3,197.7 389.7,194.2 383.5,195.1 377.4,200.3 375.6,209.1 376.5,216.0"/>
<path d="M343.8,51.8 344.0,50.9 M306.2,205.0 307.4,203.3 M180.0,286.0 180.4,287.4 M225.0,286.0 224.0,288.0 M270.0,286.0 272.7,289.6 M343.9,139.6 344.0,141.4 M150.0,286.0 149.8,287.8 M444.0,43.8 443.8,44.8 M444.3,134.1 444.0,135.3 M589.0,107.5 590.0,106.9 M708.0,250.0 707.3,251.0 M641.5,251.2 643.4,250.8 M549.0,286.0 541.5,286.0 M574.0,286.0 577.8,286.0 M137.5,286.0 140.4,280.2 M182.0,289.8 181.2,287.1 M175.8,291.0 175.1,289.0 M165.8,354.8 167.8,355.1 M263.8,387.2 262.3,389.1 M220.0,286.0 225.0,286.0 M263.8,313.5 263.1,314.1 M277.5,286.0 274.6,282.3 M394.0,328.5 396.4,325.3 M394.0,321.0 394.0,323.5 M394.0,398.5 394.5,394.8 M394.0,431.0 394.0,429.8 M377.5,478.5 378.4,478.6 M335.0,542.0 337.5,542.0 M394.0,518.5 394.6,517.7 M282.5,542.0 283.8,542.0 M307.5,541.0 305.0,542.0 M323.8,542.0 330.0,542.0 M330.0,542.0 335.0,542.0 M394.0,323.5 394.0,321.0 M394.0,394.8 394.0,398.5 M394.0,429.8 394.0,431.0 M447.8,441.0 447.4,439.4 M456.5,436.0 456.8,437.2 M541.5,286.0 549.0,286.0 M519.0,311.0 516.6,309.2 M577.8,286.0 574.4,284.9 M644.0,318.5 645.9,319.2 M609.0,448.5 608.8,446.9 M684.0,542.0 681.5,542.3 M708.0,408.5 709.4,417.0 M708.0,476.0 708.0,478.5 M708.0,478.5 708.0,476.0 M575.2,501.0 575.7,501.7 M394.0,517.2 394.0,518.5 M419.0,519.8 420.6,520.2 M535.2,510.5 536.1,509.2 M409.0,519.8 408.7,518.6 M452.8,542.0 453.4,541.3 M490.2,542.0 487.8,542.0 M741.8,410.5 741.5,409.1 M746.8,542.0 745.5,542.0 M708.0,497.2 700.2,496.0 M795.5,542.0 794.2,542.0 M920.5,457.2 921.6,456.2 M883.0,511.0 891.2,514.1 M865.5,542.0 863.0,542.0 M980.5,518.5 982.1,518.7 M943.0,542.0 950.0,545.5 M283.8,542.0 282.5,542.0 M305.0,542.0 307.5,541.0 M337.5,542.0 335.1,541.5 M225.0,798.0 224.0,798.5 M394.0,724.5 392.2,723.4 M202.5,798.0 200.5,798.0 M162.5,798.0 161.6,798.0 M455.2,627.0 454.1,627.0 M487.8,542.0 490.2,542.0 M519.0,553.2 520.4,553.0 M519.0,565.8 523.3,563.6 M591.5,618.2 589.4,618.5 M620.2,572.0 620.9,571.4 M708.0,593.2 708.0,592.0 M681.5,542.0 684.0,542.0 M708.0,547.0 712.2,545.3 M708.0,638.2 708.0,640.8 M708.0,679.5 708.8,672.1 M708.0,713.2 708.0,717.0 M708.0,740.8 708.4,741.9 M708.0,779.5 708.0,782.0 M626.5,798.0 625.7,798.6 M716.8,542.0 711.6,544.0 M718.0,592.0 722.3,588.3 M708.0,592.0 707.5,593.0 M745.5,542.0 746.8,542.0 M794.2,542.0 795.5,542.0 M823.0,563.2 822.2,563.2 M708.0,640.8 708.0,638.2 M708.0,717.0 708.0,713.2 M708.0,742.0 707.4,741.1 M708.0,782.0 708.0,779.5 M951.8,542.0 949.0,537.8 M900.5,542.0 906.9,539.3 M863.0,542.0 865.5,542.0 M1022.0,698.2 1019.8,695.8 M920.5,798.0 921.5,798.0 M994.5,798.0 990.5,798.0 M1009.5,798.0 1013.5,798.0 M1069.5,792.0 1065.8,798.0 M1067.0,798.0 1065.8,798.0 M110.0,833.0 108.8,832.9 M161.6,798.0 162.5,798.0 M200.5,798.0 202.5,798.0 M223.8,798.0 224.8,797.6 M394.0,945.5 394.0,948.0 M280.0,915.5 280.9,914.4 M394.0,948.0 394.0,945.5 M491.5,918.0 490.5,917.8 M494.0,838.0 495.0,836.0 M625.2,798.0 626.2,797.5 M708.0,890.5 708.0,888.0 M708.0,855.5 708.0,863.0 M674.0,915.5 675.2,914.2 M708.0,918.0 708.2,919.2 M830.2,798.0 828.6,797.0 M877.2,798.0 878.0,795.8 M881.3,798.0 881.7,796.7 M921.5,798.0 920.5,798.0 M708.0,863.0 708.0,866.8 M708.0,866.8 709.7,864.2 M708.0,888.0 708.0,890.5 M708.0,919.2 707.5,918.2 M844.2,863.0 842.5,863.4 M990.5,798.0 994.5,798.0 M1013.5,798.0 1009.5,798.0 M1022.0,910.5 1022.0,911.8 M1022.0,885.5 1020.8,884.7 M1065.8,798.0 1067.0,798.0 M1014.5,868.0 1014.8,866.9 M1074.5,975.5 1075.7,975.2 M1074.5,970.5 1074.5,975.5 M404.6,518.0 405.0,519.5 M716.0,555.0 717.2,555.0 M368.2,917.1 369.6,915.2 M344.0,50.9 343.8,51.8 M444.0,44.8 444.0,43.8 M344.0,141.4 343.9,139.6 M444.0,135.3 444.3,134.1"/>
</g>
<!-- coast -->
<path d="M542.9,37.9 589.2,111.1 602.1,130.5 619.4,152.2 632.3,165.1 638.7,173.5 651.6,190.8 660.8,201.9 669.4,211.3 680.4,225.3 693.1,237.4 702.7,244.5 710.3,249.9 716.1,256.5 719.3,261.2 727.2,270.7 738.2,283.3 743.7,288.3 753.7,295.8 766.2,305.7 781.2,318.2 793.8,328.4 806.4,335.9 821.3,347.2 836.3,357.2 850.3,367.3 857.6,370.1 861.9,369.2 871.2,375.8 880.9,384.3 887.9,392.2 890.2,404.4 895.7,415.2 904.3,423.6 906.5,434.6 913.1,445.1 920.8,455.4 931.0,465.6 943.6,477.0 956.1,488.2 968.6,499.4 977.9,507.2 979.0,521.7 983.4,528.0 993.3,536.9 997.5,544.1 1008.2,550.8 1018.0,554.5 1019.9,557.9 1027.8,564.3 1040.3,573.2 1052.9,581.9 1065.4,589.4 1078.0,598.3 1090.8,604.6 1103.4,609.7 1116.0,614.7 1121.1,616.0 1130.8,619.7 1140.8,624.7 1153.5,629.7 1159.1,631.1 1161.9,630.8 1165.3,634.4 1172.6,638.5" fill="none" stroke="#bdbdbd" stroke-width="0.8"/>
<path d="M545.4,36.4 591.6,109.5 604.4,128.8 621.6,150.3 634.5,163.2 641.0,171.8 653.9,189.0 663.0,200.0 671.6,209.4 682.5,223.4 695.0,235.2 704.4,242.2 712.2,247.7 713.6,251.5 718.4,254.7 721.6,259.4 729.4,268.8 740.3,281.3 745.5,286.0 755.5,293.5 768.0,303.5 783.0,316.0 795.5,326.0 808.0,333.5 823.0,344.8 838.0,354.8 851.8,364.8 858.0,367.2 863.0,366.5 873.0,373.5 883.0,382.2 890.5,391.0 893.0,403.5 898.0,413.5 906.8,422.2 909.2,433.5 915.5,443.5 923.0,453.5 933.0,463.5 945.5,474.8 958.0,486.0 970.5,497.2 980.5,506.0 984.2,507.2 983.0,512.2 981.8,521.0 985.5,526.0 995.5,535.0 999.5,542.0 1009.5,548.2 1019.5,552.0 1022.0,555.8 1029.5,562.0 1042.0,570.8 1054.5,579.5 1067.0,587.0 1079.5,595.8 1092.0,602.0 1104.5,607.0 1117.0,612.0 1122.0,613.2 1123.2,620.8 1125.8,622.0 1125.8,614.5 1132.0,617.0 1142.0,622.0 1154.5,627.0 1159.5,628.2 1163.2,628.2 1167.0,632.0 1174.0,636.0" fill="none" stroke="#4a4e52" stroke-width="1.25" stroke-linejoin="round"/>
<g fill="#cfe3f3" stroke="#55606b" stroke-width="0.8" stroke-linejoin="round">
<path d="M623.8,165.4 L633.5,164 L634.4,165.8 L624.4,167.2Z"/>
<path d="M630.4,180 L640.6,171.1 L641.8,172.4 L631.4,181.4Z"/>
<path d="M706,255.6 L712.6,252.4 L713.4,253.6 L707,256.4Z"/>
<path d="M980.8,506.6 L984.4,505.8 L985,508.2 L982,508.8Z"/>
<circle cx="1161.4" cy="627.2" r="1.5"/>
</g>
<path d="M1019.6,553 L1021.4,555.4 L1013,567 L1008.6,571.6 L1007.6,566 L1012,558Z" fill="#8aa2b8" stroke="#3f4a55" stroke-width="0.9" stroke-linejoin="round"/>
</g>
<!-- grid lines -->
<g fill="none">
<line x1="491.6" y1="35.85" x2="491.6" y2="987.55" stroke="#585858" stroke-width="1.05"/>
<line x1="979.15" y1="35.85" x2="979.15" y2="987.55" stroke="#404040" stroke-width="1.4"/>
<line x1="83.25" y1="209.55" x2="1173.35" y2="209.55" stroke="#646464" stroke-width="1.05"/>
<line x1="83.25" y1="866.04" x2="1173.35" y2="866.04" stroke="#5e5e5e" stroke-width="1.15"/>
</g>
<!-- epicentre star -->
<polygon points="591.10,516.60 595.21,529.24 608.50,529.24 597.75,537.06 601.86,549.71 591.10,541.89 580.34,549.71 584.45,537.06 573.70,529.24 586.99,529.24" fill="#fff" stroke="#000" stroke-width="4.2" stroke-linejoin="miter" stroke-miterlimit="10"/>
<!-- fancy frame -->
<g id="frame">
<rect x="491.6" y="26.35" width="487.55" height="9.5" fill="#000"/>
<rect x="491.6" y="987.55" width="487.55" height="9.2" fill="#000"/>
<rect x="73.65" y="209.55" width="9.6" height="656.5" fill="#000"/>
<rect x="1173.35" y="209.55" width="9.7" height="656.5" fill="#000"/>
<g stroke="#161616" stroke-width="1.3" fill="none" stroke-linecap="square">
<line x1="73.65" y1="26.35" x2="1183.05" y2="26.35"/>
<line x1="73.65" y1="35.85" x2="1183.05" y2="35.85"/>
<line x1="73.65" y1="987.55" x2="1183.05" y2="987.55"/>
<line x1="73.65" y1="996.75" x2="1183.05" y2="996.75" stroke-width="1.5"/>
<line x1="73.65" y1="26.35" x2="73.65" y2="996.75"/>
<line x1="83.25" y1="26.35" x2="83.25" y2="996.75"/>
<line x1="1173.35" y1="26.35" x2="1173.35" y2="996.75"/>
<line x1="1183.05" y1="26.35" x2="1183.05" y2="996.75" stroke-width="1.5"/>
</g>
</g>
<!-- axis labels -->
<g class="ax">
<text x="491.6" y="16.4" text-anchor="middle">14°00'</text>
<text x="979.1" y="16.4" text-anchor="middle">14°30'</text>
<text x="491.6" y="1023.3" text-anchor="middle">14°00'</text>
<text x="979.1" y="1023.3" text-anchor="middle">14°30'</text>
<text x="64" y="218.4" text-anchor="end">42°30'</text>
<text x="64" y="874.9" text-anchor="end">42°00'</text>
<text x="1192.6" y="218.4">42°30'</text>
<text x="1192.6" y="874.9">42°00'</text>
</g>
<!-- info box -->
<rect x="544.9" y="46.7" width="610.7" height="61.5" fill="#fff" stroke="#000" stroke-width="1.1"/>
<g class="info" style="font-size:12.18px">
<text x="549.6" y="59.7">Terremoto del 31-01-2010 09:13:55 (ora locale) ML=2.7 Prof=14 km</text>
<text x="549.6" y="74.7">Effetto acustico (rombo sismico)</text>
<text x="549.6" y="89.8">Dati non verificati estratti da 69 questionari compilati tramite Internet, relativi a comuni con almeno 3 questionari.</text>
<text x="549.6" y="104.9">Aggiornato il: 10-01-2026 21:18 (ora locale)</text>
</g>
<!-- legend -->
<rect x="1053.5" y="171.4" width="101.1" height="332" fill="#fff" stroke="#fff" stroke-width="3.2"/>
<rect x="1053.5" y="171.4" width="101.1" height="332" fill="#fff" stroke="#000" stroke-width="1.2"/>
<rect x="1062" y="255.2" width="80" height="36.5" fill="#e6f3fd"/>
<rect x="1062" y="299.1" width="80" height="36.7" fill="#cbe4fb"/>
<rect x="1062" y="344" width="80" height="36.6" fill="#6fb0fa"/>
<rect x="1062" y="386.1" width="80" height="37.8" fill="#0564cd"/>
<line x1="1053.5" y1="435.3" x2="1154.6" y2="435.3" stroke="#000" stroke-width="1" stroke-dasharray="2.2,2.2"/>
<g class="lg">
<text x="1104.4" y="192.6" textLength="85.6" lengthAdjust="spacingAndGlyphs">Percentuale</text>
<text x="1104.9" y="208.4" textLength="96.8" lengthAdjust="spacingAndGlyphs">di percezione</text>
<text x="1104.5" y="224.4" textLength="79" lengthAdjust="spacingAndGlyphs">dell'effetto</text>
<text x="1104.5" y="240.5" textLength="58.5" lengthAdjust="spacingAndGlyphs">acustico</text>
<text x="1101.9" y="277.8" textLength="52.8" lengthAdjust="spacingAndGlyphs">0 - 24%</text>
<text x="1102.5" y="321.5" textLength="61.8" lengthAdjust="spacingAndGlyphs">25 - 49%</text>
<text x="1102.5" y="366.8" textLength="61.8" lengthAdjust="spacingAndGlyphs">50 - 74%</text>
<text x="1102" y="408.7" textLength="70.5" lengthAdjust="spacingAndGlyphs" fill="#fff">75 - 100%</text>
<text x="1103.5" y="451.7" textLength="67.5" lengthAdjust="spacingAndGlyphs">Epicentro</text>
<text x="1103.5" y="467.9" textLength="87.5" lengthAdjust="spacingAndGlyphs">strumentale</text>
</g>
<polygon points="1102.00,482.00 1103.93,487.94 1110.18,487.94 1105.12,491.62 1107.05,497.56 1102.00,493.88 1096.95,497.56 1098.88,491.62 1093.82,487.94 1100.07,487.94" fill="#fff" stroke="#000" stroke-width="1.3" stroke-linejoin="miter" stroke-miterlimit="10"/>
<!-- scale bar -->
<g id="scalebar">
<rect x="128.2" y="930.7" width="237.1" height="5.7" fill="#fff" stroke="#000" stroke-width="1.2"/>
<rect x="128.2" y="930.7" width="59.5" height="5.7" fill="#000"/>
<rect x="246.8" y="930.7" width="59.3" height="5.7" fill="#000"/>
<g stroke="#000" stroke-width="1.2">
<line x1="128.2" y1="930.2" x2="128.2" y2="940.6"/>
<line x1="246.8" y1="930.2" x2="246.8" y2="940.6"/>
<line x1="365.3" y1="930.2" x2="365.3" y2="940.6"/>
<line x1="187.7" y1="930.2" x2="187.7" y2="938.6"/>
<line x1="306.1" y1="930.2" x2="306.1" y2="938.6"/>
</g>
<g class="ax" style="font-size:23px">
<text x="128.2" y="965.1" text-anchor="middle">0</text>
<text x="247" y="965.1" text-anchor="middle">10</text>
<text x="365.3" y="965.1" text-anchor="middle">20</text>
<text x="246.9" y="915.5" text-anchor="middle" style="font-size:31px">km</text>
</g>
</g>
<!-- INGV logo -->
<defs>
<linearGradient id="gblue" x1="0.2" y1="0" x2="0.6" y2="1"><stop offset="0" stop-color="#27a6cb"/><stop offset="0.55" stop-color="#1380ad"/><stop offset="1" stop-color="#0a5b89"/></linearGradient>
<radialGradient id="gshade" cx="0.4" cy="0.35" r="0.7"><stop offset="0.6" stop-color="#000" stop-opacity="0"/><stop offset="1" stop-color="#000" stop-opacity="0.22"/></radialGradient>
<clipPath id="gclip"><circle cx="132" cy="78" r="30"/></clipPath>
</defs>
<g id="ingv">
<circle cx="132" cy="78" r="30" fill="url(#gblue)"/>
<g clip-path="url(#gclip)">
<g transform="translate(96,42) scale(0.068376)">
<path d="M580,278 L665,100 Q760,130 810,200 Q690,215 580,278Z" fill="#2e9e3c"/>
<path d="M800,170 L840,215 L805,210Z" fill="#f0e020"/>
<path d="M580,282 Q690,215 800,205 Q818,270 806,338 Q700,292 580,284Z" fill="#e3132a"/>
<path d="M800,205 L830,150 L1010,200 L1010,470 L925,470 Q870,400 806,342 Q818,270 800,205Z" fill="#c9b8d0"/>
<path d="M585,290 Q700,298 800,350 L730,442 Q670,350 585,290Z" fill="#2e9e3c"/>
<path d="M572,300 Q670,350 716,446 Q640,482 563,472Z" fill="#f2e21c"/>
<path d="M735,446 L802,360 Q870,410 922,482 Q880,560 810,612 Q780,520 735,446Z" fill="#efe01e"/>
<path d="M563,478 Q640,486 721,452 Q770,530 796,626 Q680,690 553,692Z" fill="#e00f27"/>
<path d="M815,626 Q885,570 932,492 L1010,480 L1010,720 L900,800 L852,778 Q840,700 815,626Z" fill="#c7b6cf"/>
<path d="M935,445 L1000,430 L1000,520 L948,510Z" fill="#2e9e3c"/>
<path d="M553,700 Q680,697 797,640 Q830,710 842,792 Q700,880 538,902Z" fill="#249a3a"/>
<path d="M538,912 Q700,890 846,806 L800,980 L525,990Z" fill="#168a3a"/>
<path d="M850,792 L905,745 L960,760 L900,850Z" fill="#e3132a"/>
<g fill="none" stroke="#fff" stroke-width="9" stroke-linecap="round" opacity="0.92">
<path d="M575,283 Q520,180 465,105"/>
<path d="M575,283 Q450,230 345,213 Q250,240 180,295"/>
<path d="M575,283 Q430,290 330,330 Q180,420 95,545"/>
<path d="M575,283 Q470,360 420,440 Q340,560 310,625 Q260,740 235,840"/>
<path d="M575,283 Q560,480 553,692 Q545,820 522,965"/>
<path d="M575,283 L665,110"/>
<path d="M575,283 Q690,215 805,208"/>
<path d="M575,283 Q700,292 806,340 Q880,400 935,480"/>
<path d="M575,283 Q670,350 721,450 Q775,530 797,630 Q835,710 848,800"/>
<path d="M345,213 Q320,330 425,440 Q490,475 563,474 Q650,482 725,448 L805,350 Q818,270 803,205"/>
<path d="M180,295 Q170,380 185,435 Q230,560 312,625 Q420,690 553,694 Q690,692 800,632 Q885,570 935,485"/>
<path d="M95,545 Q130,700 237,835 Q380,905 538,906 Q700,890 848,802"/>
</g>
</g>
<circle cx="132" cy="78" r="30" fill="url(#gshade)"/>
</g>
<g font-family="'Liberation Sans',Arial,sans-serif" font-weight="bold" font-size="14.4px" fill="#3f3f3f">
<text x="169.7" y="75" textLength="88.8" lengthAdjust="spacingAndGlyphs">ISTITUTO NAZIONALE</text>
<text x="169.7" y="88.9" textLength="135.6" lengthAdjust="spacingAndGlyphs">DI GEOFISICA E VULCANOLOGIA</text>
</g>
</g>
<!-- hai sentito il terremoto logo -->
<defs>
<path id="hspath" d="M1135.60,930.39 A41.5,41.5 0 1 1 1057.60,902.01 A41.5,41.5 0 1 1 1135.60,930.39"/>
<linearGradient id="gcone" x1="0" y1="0" x2="1" y2="0"><stop offset="0" stop-color="#1f6fb2"/><stop offset="0.6" stop-color="#0d8fd6"/><stop offset="1" stop-color="#0a9de6"/></linearGradient>
</defs>
<g id="hslogo">
<circle cx="1096.6" cy="916.2" r="33.2" fill="#1d1d1b"/>
<circle cx="1096.6" cy="916.2" r="19.6" fill="none" stroke="#e30613" stroke-width="5.2"/>
<circle cx="1096.6" cy="916.2" r="8" fill="#e30613"/>
<path d="M1101.6,911.7 L1130.1,900.7 Q1132.6,900.2 1132.6,903.2 L1132.6,931.2 Q1132.6,934.2 1129.6,933.2 L1101.6,922.2 Z" fill="url(#gcone)"/>
<path d="M1101.6,922.2 L1129.6,933.2 Q1132.6,934.2 1132.6,931.2 L1132.6,928.2 Q1131.6,931.2 1128.6,930.2 Z" fill="#1763a6" opacity="0.75"/>
<circle cx="1145.7" cy="916.3" r="10" fill="#e30613"/>
<text x="1145.7" y="916.3" transform="rotate(90 1145.7 916.3)" font-family="'Liberation Sans',Arial,sans-serif" font-weight="bold" font-size="15px" fill="#fff" text-anchor="middle" dy="5.2">?</text>
<g font-family="'Liberation Sans',Arial,sans-serif">
<text font-weight="bold" fill="#e30613" font-size="21px"><textPath href="#hspath" xlink:href="#hspath" startOffset="9.78" textLength="36.58" lengthAdjust="spacingAndGlyphs">www.</textPath></text>
<text font-weight="normal" fill="#1d1d1b" font-size="21px"><textPath href="#hspath" xlink:href="#hspath" startOffset="47.44" textLength="22.82" lengthAdjust="spacingAndGlyphs">hai</textPath></text>
<text font-weight="bold" fill="#111" font-size="21px"><textPath href="#hspath" xlink:href="#hspath" startOffset="71.34" textLength="53.96" lengthAdjust="spacingAndGlyphs">sentito</textPath></text>
<text font-weight="normal" fill="#1d1d1b" font-size="21px"><textPath href="#hspath" xlink:href="#hspath" startOffset="127.12" textLength="7.61" lengthAdjust="spacingAndGlyphs">il</textPath></text>
<text font-weight="bold" fill="#111" font-size="21px"><textPath href="#hspath" xlink:href="#hspath" startOffset="136.53" textLength="75.69" lengthAdjust="spacingAndGlyphs">terremoto</textPath></text>
<text font-weight="bold" fill="#e30613" font-size="21px"><textPath href="#hspath" xlink:href="#hspath" startOffset="213.31" textLength="16.30" lengthAdjust="spacingAndGlyphs">.it</textPath></text>
</g>
</g>
</svg>
</body>
</html>
